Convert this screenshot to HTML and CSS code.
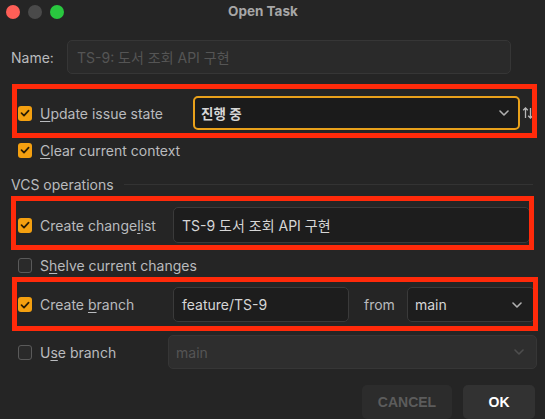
FILE: index.html
```html
<!DOCTYPE html>
<html>
<head>
<meta charset="utf-8">
<link rel="stylesheet" href="styles.css">
</head>
<body>
<div class="dialog">
  <div class="titlebar">
    <div class="lights">
      <span class="light red"></span>
      <span class="light gray"></span>
      <span class="light green"></span>
    </div>
    <div class="title">Open Task</div>
  </div>

  <div class="row row-name">
    <span class="name-label">Name:</span>
    <div class="field field-disabled name-field">TS-9: 도서 조회 API 구현</div>
  </div>

  <div class="row row-update">
    <label class="check check-update"><span class="box on"><svg viewBox="0 0 14 14"><polyline points="3.5,7.2 6,9.6 10.6,4.6"/></svg></span><span class="lbl"><u>U</u>pdate issue state</span></label>
    <div class="select select-focus update-select"><span class="val bold">진행 중</span><svg class="chev" viewBox="0 0 10 6"><polyline points="1,1 5,5 9,1"/></svg></div>
    <svg class="sort" viewBox="0 0 12 14"><path d="M3.5 12V2M1.2 4.3L3.5 2l2.3 2.3M8.5 2v10M6.2 9.7L8.5 12l2.3-2.3"/></svg>
    <span class="mark mark1"></span>
  </div>

  <div class="row row-clear">
    <label class="check"><span class="box on"><svg viewBox="0 0 14 14"><polyline points="3.5,7.2 6,9.6 10.6,4.6"/></svg></span><span class="lbl"><u>C</u>lear current context</span></label>
  </div>

  <div class="row row-section">
    <span class="section-title">VCS operations</span>
    <span class="section-line"></span>
  </div>

  <div class="row row-changelist">
    <label class="check check-wide"><span class="box on"><svg viewBox="0 0 14 14"><polyline points="3.5,7.2 6,9.6 10.6,4.6"/></svg></span><span class="lbl">Create change<u>l</u>ist</span></label>
    <div class="field changelist-field">TS-9 도서 조회 API 구현</div>
    <span class="mark mark2"></span>
  </div>

  <div class="row row-shelve">
    <label class="check"><span class="box"></span><span class="lbl">S<u>h</u>elve current changes</span></label>
  </div>

  <div class="row row-branch">
    <label class="check check-wide"><span class="box on"><svg viewBox="0 0 14 14"><polyline points="3.5,7.2 6,9.6 10.6,4.6"/></svg></span><span class="lbl">Create <u>b</u>ranch</span></label>
    <div class="field branch-field">feature/TS-9</div>
    <span class="from">from</span>
    <div class="select from-select"><span class="val">main</span><svg class="chev" viewBox="0 0 10 6"><polyline points="1,1 5,5 9,1"/></svg></div>
    <span class="mark mark3"></span>
  </div>

  <div class="row row-use">
    <label class="check check-use"><span class="box"></span><span class="lbl">U<u>s</u>e branch</span></label>
    <div class="select select-disabled use-select"><span class="val">main</span><svg class="chev" viewBox="0 0 10 6"><polyline points="1,1 5,5 9,1"/></svg></div>
  </div>

  <div class="row row-buttons">
    <button class="btn btn-cancel">CANCEL</button>
    <button class="btn btn-ok">OK</button>
  </div>
</div>
</body>
</html>
```

FILE: styles.css
```css
* { box-sizing: border-box; }
html, body {
  margin: 0;
  padding: 0;
  background: #252525;
}
body {
  width: 545px;
  height: 419px;
  overflow: hidden;
  font-family: "Inter", "Noto Sans CJK KR", sans-serif;
  font-size: 14px;
  color: #b9bbbe;
  white-space: nowrap;
}
.dialog {
  display: flex;
  flex-direction: column;
  width: 545px;
  height: 419px;
  background: #252525;
}
.titlebar {
  position: relative;
  height: 24px;
  display: flex;
  align-items: center;
  padding-left: 228px;
}
.lights {
  position: absolute;
  left: 6px;
  top: 5px;
  display: flex;
  gap: 8px;
}
.light {
  width: 14px;
  height: 14px;
  border-radius: 50%;
  display: block;
}
.light.red { background: #fe5f57; }
.light.gray { background: #4a4a4a; }
.light.green { background: #29c73f; }
.title {
  font-weight: 700;
  font-size: 13.5px;
  color: #a7a7a7;
  margin-top: -2px;
}
.row {
  position: relative;
  display: flex;
  align-items: center;
  flex-shrink: 0;
}
.row-name { margin-top: 17px; height: 34px; padding-left: 11px; }
.row-update { margin-top: 22px; height: 34px; }
.row-clear { margin-top: 12px; height: 16px; }
.row-section { margin-top: 18px; height: 16px; padding-left: 11px; }
.row-changelist { margin-top: 15px; height: 36px; }
.row-shelve { margin-top: 14px; height: 16px; }
.row-branch { margin-top: 14px; height: 35px; }
.row-use { margin-top: 13px; height: 34px; }
.row-buttons { margin-top: 16px; height: 34px; justify-content: flex-end; padding-right: 10px; gap: 11px; }

.name-label { width: 56px; color: #b9bbbe; }
.field {
  height: 100%;
  border: 1px solid #3a3a3a;
  border-radius: 5px;
  background: #1d1d1d;
  color: #d6d6d6;
  display: flex;
  align-items: center;
  padding-left: 8px;
  font-size: 14px;
  flex-shrink: 0;
}
.field-disabled {
  background: #2a2a2a;
  border-color: #363636;
  color: #555555;
}
.name-field { width: 444px; padding-left: 9px; }

.check {
  display: flex;
  align-items: center;
  padding-left: 18px;
  flex-shrink: 0;
}
.check-update { width: 193px; }
.check-wide { width: 173px; }
.check-use { width: 168px; }
.box {
  width: 14px;
  height: 15px;
  border-radius: 3px;
  border: 1.5px solid #5a5a5a;
  background: #2a2a2a;
  display: flex;
  align-items: center;
  justify-content: center;
  flex-shrink: 0;
}
.box.on {
  border: none;
  background: #f4a010;
}
.box svg {
  width: 14px;
  height: 14px;
  fill: none;
  stroke: #2a1d05;
  stroke-width: 1.7;
  stroke-linecap: round;
  stroke-linejoin: round;
}
.lbl { margin-left: 8px; color: #b9bbbe; }
.lbl u { text-underline-offset: 2px; }

.select {
  height: 100%;
  border-radius: 5px;
  display: flex;
  align-items: center;
  justify-content: space-between;
  padding: 0 10px 0 7px;
  background: #1d1d1d;
  border: 1px solid #3a3a3a;
  color: #d6d6d6;
  flex-shrink: 0;
}
.select .val.bold { font-weight: 600; font-size: 13.5px; }
.chev {
  width: 10px;
  height: 6px;
  fill: none;
  stroke: #b0b0b0;
  stroke-width: 1.6;
  stroke-linecap: round;
  stroke-linejoin: round;
}
.select-focus {
  border: 2px solid #e9a11b;
  background: #1b1b1b;
  padding-left: 6px;
  padding-right: 9px;
}
.update-select { width: 327px; }
.sort {
  width: 12px;
  height: 14px;
  margin-left: 2px;
  fill: none;
  stroke: #b8b8b8;
  stroke-width: 1.3;
  flex-shrink: 0;
}

.section-title { color: #b9bbbe; }
.section-line {
  flex: 1;
  height: 1px;
  background: #333333;
  margin-left: 10px;
  margin-right: 12px;
}

.changelist-field { width: 357px; }
.branch-field { width: 176px; }
.from { margin-left: 15px; color: #b9bbbe; }
.from-select { margin-left: 12px; width: 128px; padding-right: 12px; }
.use-select { width: 369px; padding-right: 12px; }
.select-disabled {
  background: #2e2e2e;
  border-color: #363636;
  color: #555555;
}
.select-disabled .chev { stroke: #4e4e4e; }

.btn {
  height: 34px;
  border: none;
  border-radius: 5px;
  font-family: "Liberation Sans", "Inter", sans-serif;
  font-weight: 700;
  font-size: 14px;
}
.btn-cancel { width: 90px; background: #2c2c2c; color: #5c5c5c; }
.btn-ok { width: 72px; background: #323232; color: #ffffff; }

.mark {
  position: absolute;
  border: 5px solid #ff2a0a;
  pointer-events: none;
}
.mark1 { left: 12px; top: -12px; width: 525px; height: 54px; }
.mark2 { left: 11px; top: -11px; width: 523px; height: 54px; }
.mark3 { left: 12px; top: -10px; width: 526px; height: 54px; }
```
